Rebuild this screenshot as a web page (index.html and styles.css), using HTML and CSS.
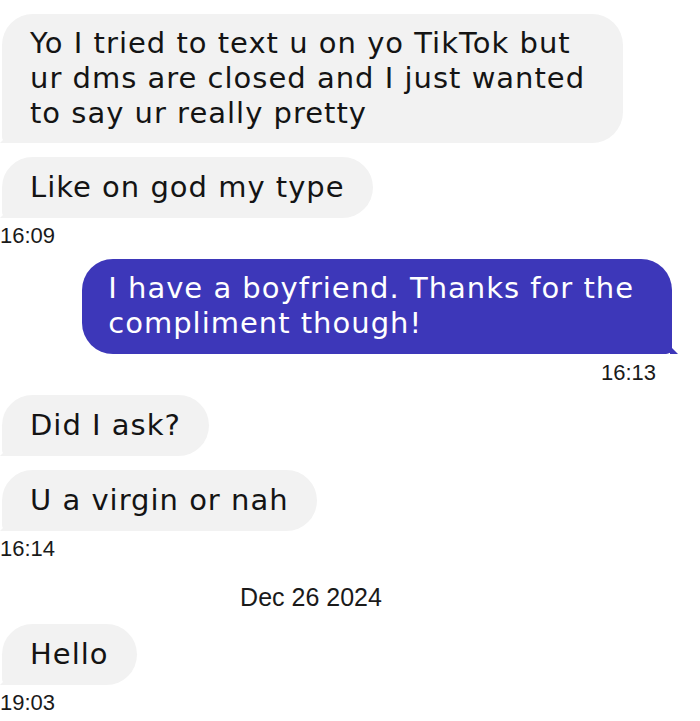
FILE: index.html
```html
<!DOCTYPE html>
<html>
<head>
    <title>Chat</title>
    <link rel="stylesheet" href="styles.css">
</head>
<body>

<div class="chat">
    <div class="msg in first">Yo I tried to text u on yo TikTok but<br>ur dms are closed and I just wanted<br>to say ur really pretty</div>
    <div class="msg in">Like on god my type</div>
    <div class="time left">16:09</div>

    <div class="msg out">I have a boyfriend. Thanks for the<br>compliment though!</div>
    <div class="time right">16:13</div>

    <div class="msg in">Did I ask?</div>
    <div class="msg in">U a virgin or nah</div>
    <div class="time left">16:14</div>

    <div class="day">Dec 26 2024</div>

    <div class="msg in">Hello</div>
    <div class="time left">19:03</div>
</div>

</body>
</html>
```

FILE: styles.css
```css
body {
    margin: 0;
    background: #fff;
}

.chat {
    display: flex;
    flex-direction: column;
    align-items: flex-start;
    padding: 14px 28px 0 2px;
    font-family: "DejaVu Sans", sans-serif;
}

.msg {
    position: relative;
    font-size: 29px;
    letter-spacing: 1px;
    line-height: 35px;
    padding: 13px 28px;
    border-radius: 31px;
    margin-top: 14px;
}

.msg.first {
    margin-top: 0;
    padding: 12px 38px 12px 28px;
}

.msg.in {
    background: #f2f2f2;
    color: #141414;
    border-bottom-left-radius: 6px;
}

.msg.out {
    align-self: flex-end;
    margin-top: 10px;
    background: #3d37b9;
    color: #fff;
    padding: 12px 38px 13px 26px;
    border-bottom-right-radius: 6px;
}

/* little tails at the bottom corner */
.msg.in::after,
.msg.out::after {
    content: "";
    position: absolute;
    bottom: 0;
    width: 8px;
    height: 8px;
}

.msg.in::after {
    left: -2px;
    background: #f2f2f2;
    clip-path: polygon(100% 0, 100% 100%, 0 100%);
}

.msg.out::after {
    right: -6px;
    background: #3d37b9;
    clip-path: polygon(0 0, 100% 100%, 0 100%);
}

.time {
    font-family: "Liberation Sans", Arial, sans-serif;
    font-size: 22px;
    line-height: 26px;
    color: #1a1a1a;
    margin-top: 5px;
}

.time.left {
    margin-left: -2px;
}

.time.right {
    align-self: flex-end;
    margin-top: 6px;
    margin-right: 16px;
}

.time + .msg {
    margin-top: 10px;
}

.time.right + .msg {
    margin-top: 9px;
}

.day {
    align-self: stretch;
    text-align: center;
    padding-right: 52px;
    font-family: "Liberation Sans", Arial, sans-serif;
    font-size: 25px;
    line-height: 28px;
    color: #1a1a1a;
    margin-top: 21px;
}

.day + .msg {
    margin-top: 13px;
}
```
